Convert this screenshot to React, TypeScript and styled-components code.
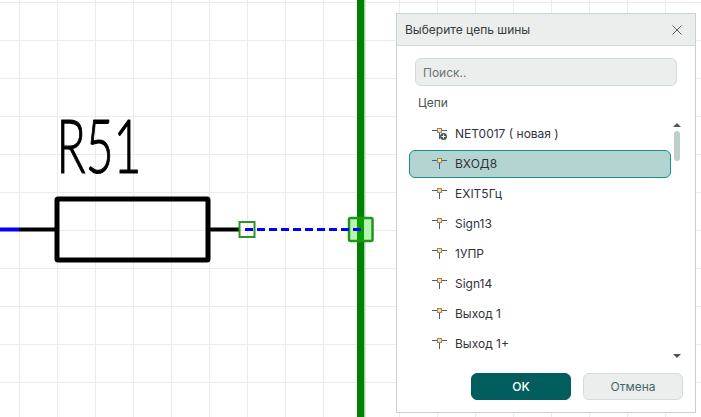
import styled, { createGlobalStyle } from 'styled-components';

const GlobalStyle = createGlobalStyle`
  html, body {
    margin: 0;
    padding: 0;
    background: #fff;
  }
`;

const Page = styled.div`
  position: relative;
  width: 701px;
  height: 417px;
  overflow: hidden;
  font-family: Inter, "Liberation Sans", sans-serif;
  background-color: #fff;
  background-image:
    linear-gradient(to right, #ebebeb 1px, transparent 1px),
    linear-gradient(to bottom, #ebebeb 1px, transparent 1px);
  background-size: 38px 38px;
  background-position: 19px 2px;
`;

const Schematic = styled.svg`
  display: block;
  width: 701px;
  height: 417px;
`;

const Designator = styled.text`
  font-family: Lato, "Liberation Sans", sans-serif;
  font-weight: 300;
  font-size: 74px;
  fill: #000;
  stroke: #000;
  stroke-width: 1.2px;
  stroke-linejoin: round;
`;

const Dialog = styled.section`
  position: absolute;
  left: 396px;
  top: 13px;
  width: 300px;
  height: 400px;
  box-sizing: border-box;
  display: flex;
  flex-direction: column;
  background: #fff;
  border: 1px solid #c6d2cf;
`;

const DialogHeader = styled.header`
  height: 32px;
  flex: none;
  box-sizing: border-box;
  display: flex;
  align-items: center;
  justify-content: space-between;
  padding: 0 13px 0 8px;
  background: #eceeed;
  border-bottom: 1px solid #d3dbd9;
  color: #333c3c;
  font-size: 12px;
`;

const CloseIcon = styled.svg`
  width: 10px;
  height: 10px;
  stroke: #566060;
  stroke-width: 1;
  fill: none;
`;

const DialogBody = styled.div`
  flex: 1;
  display: flex;
  flex-direction: column;
  padding: 12px 18px 0 12px;
  min-height: 0;
`;

const SearchInput = styled.input`
  flex: none;
  box-sizing: border-box;
  width: 262px;
  height: 28px;
  margin-left: 6px;
  padding: 0 7px;
  background: #eceeed;
  border: 1px solid #d3dcda;
  border-radius: 6px;
  font-family: inherit;
  font-size: 12px;
  outline: none;

  &::placeholder {
    color: #6a7474;
    opacity: 1;
  }
`;

const ListCaption = styled.div`
  margin: 10px 0 0 9px;
  height: 14px;
  line-height: 14px;
  color: #4a5555;
  font-size: 12px;
`;

const ListWrap = styled.div`
  position: relative;
  margin-top: 10px;
  height: 239px;
`;

const List = styled.ul`
  list-style: none;
  margin: 0;
  padding: 0;
  width: 262px;
  display: flex;
  flex-direction: column;
  gap: 2px;
`;

const Row = styled.li<{ $selected?: boolean }>`
  box-sizing: border-box;
  height: 28px;
  display: flex;
  align-items: center;
  gap: 6px;
  padding: 0 0 2px 21px;
  border-radius: 6px;
  border: 1px solid ${({ $selected }) => ($selected ? '#12908a' : 'transparent')};
  background: ${({ $selected }) => ($selected ? '#b3d4d1' : 'transparent')};
  color: #32323c;
  font-size: 12px;
`;

const NetIcon = styled.svg`
  flex: none;
  width: 18px;
  height: 14px;
  margin-top: 2px;
`;

const ScrollTrack = styled.div`
  position: absolute;
  top: 3px;
  right: -4px;
  width: 9px;
  height: 235px;
  display: flex;
  flex-direction: column;
  align-items: center;
`;

const Arrow = styled.div<{ $down?: boolean }>`
  width: 0;
  height: 0;
  border-left: 4px solid transparent;
  border-right: 4px solid transparent;
  ${({ $down }) => ($down ? 'border-top: 4px solid #4d5656;' : 'border-bottom: 4px solid #4d5656;')}
`;

const Thumb = styled.div`
  width: 6px;
  height: 30px;
  margin-top: 4px;
  border-radius: 3px;
  background: #c2cecc;
`;

const Spacer = styled.div`
  flex: 1;
`;

const Footer = styled.footer`
  flex: none;
  display: flex;
  justify-content: flex-end;
  gap: 12px;
  padding: 0 12px 12px 0;
`;

const Button = styled.button<{ $primary?: boolean }>`
  box-sizing: border-box;
  width: 100px;
  height: 27px;
  border-radius: 6px;
  border: 1px solid ${({ $primary }) => ($primary ? '#025e5e' : '#d3dcda')};
  background: ${({ $primary }) => ($primary ? '#025e5e' : '#eceeed')};
  color: ${({ $primary }) => ($primary ? '#fff' : '#3f6a6a')};
  font-family: inherit;
  font-size: 12px;
  font-weight: ${({ $primary }) => ($primary ? 500 : 400)};
`;

const nets = ['ВХОД8', 'EXIT5Гц', 'Sign13', '1УПР', 'Sign14', 'Выход 1', 'Выход 1+'];

const NetGlyph = ({ isNew }: { isNew?: boolean }) => (
  <NetIcon viewBox="0 0 18 14">
    <path d="M1 3.5h5M11 3.5h5M8.5 6v6" stroke="#4557a8" strokeWidth="1" fill="none" />
    <rect x="6.5" y="1.5" width="4" height="4" fill="#ecdfb0" stroke="#a98734" strokeWidth="1" />
    {isNew && (
      <>
        <circle cx="12.5" cy="9.5" r="3.5" fill="#4d5656" />
        <path d="M10.5 9.5h4M12.5 7.5v4" stroke="#fff" strokeWidth="1" />
      </>
    )}
  </NetIcon>
);

export default function App() {
  return (
    <Page>
      <GlobalStyle />
      <Schematic viewBox="0 0 701 417">
        <Designator x="56.5" y="173" textLength="85" lengthAdjust="spacingAndGlyphs">R51</Designator>
        <path d="M0 229.5h19" stroke="#0000ff" strokeWidth="4" />
        <path d="M19 229.5h36M209 229.5h31" stroke="#000" strokeWidth="4" />
        <rect x="57" y="199" width="151" height="61" rx="1" fill="none" stroke="#000" strokeWidth="5" strokeLinejoin="round" />
        <rect x="239.5" y="222" width="15" height="15" fill="none" stroke="#2a962a" strokeWidth="2" />
        <rect x="364" y="0" width="1.5" height="417" fill="#a8d4a8" />
        <rect x="357" y="0" width="7" height="417" fill="#008000" />
        <rect x="349" y="218" width="23.5" height="23" rx="1.5" fill="#b6f7b0" stroke="#1f941f" strokeWidth="2.5" />
        <rect x="357" y="219" width="7" height="21" fill="#00a000" />
        <path d="M245 229.5H362" stroke="#0000ff" strokeWidth="3" strokeDasharray="8 4" />
      </Schematic>

      <Dialog>
        <DialogHeader>
          Выберите цепь шины
          <CloseIcon viewBox="0 0 10 10">
            <path d="M.5.5l9 9M9.5.5l-9 9" />
          </CloseIcon>
        </DialogHeader>
        <DialogBody>
          <SearchInput placeholder="Поиск.." />
          <ListCaption>Цепи</ListCaption>
          <ListWrap>
            <List>
              <Row>
                <NetGlyph isNew />
                NET0017 ( новая )
              </Row>
              {nets.map((net, i) => (
                <Row key={net} $selected={i === 0}>
                  <NetGlyph />
                  {net}
                </Row>
              ))}
            </List>
            <ScrollTrack>
              <Arrow />
              <Thumb />
              <Spacer />
              <Arrow $down />
            </ScrollTrack>
          </ListWrap>
        </DialogBody>
        <Footer>
          <Button $primary>OK</Button>
          <Button>Отмена</Button>
        </Footer>
      </Dialog>
    </Page>
  );
}
